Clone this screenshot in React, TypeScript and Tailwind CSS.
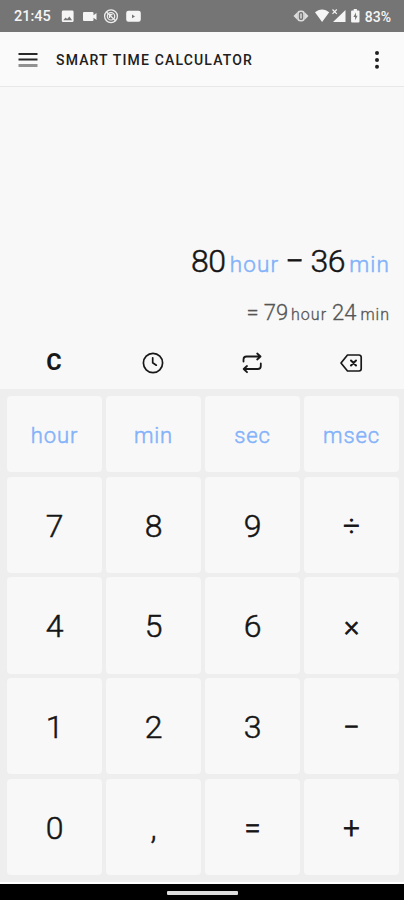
import React from 'react';

function StatusBar() {
  return (
    <header className="flex h-8 shrink-0 items-center bg-[#757575] pr-[13px] pl-[14px] text-[#f5f5f5]">
      <span className="w-[47px] pt-[2px] text-[14.5px] leading-4 font-medium">21:45</span>
      <svg className="h-8 w-[82px]" viewBox="0 0 82 32" fill="none">
        <path fillRule="evenodd" fill="#f5f5f5" d="M2.200 10.500h9a1.400 1.400 0 0 1 1.400 1.400v8.800a1.400 1.400 0 0 1-1.400 1.400h-9a1.400 1.400 0 0 1-1.400-1.400v-8.800a1.400 1.400 0 0 1 1.400-1.400zM2.300 20.300h8.800l-2.700-3.900-2.300 2.700-1.500-1.700z" />
        <path fill="#f5f5f5" d="M23 12h8.500a1 1 0 0 1 1 1v2.300l3-2.400v7.200l-3-2.400v2.300a1 1 0 0 1-1 1H23a1 1 0 0 1-1-1v-7a1 1 0 0 1 1-1z" />
        <circle cx="50" cy="16.300" r="6.400" stroke="#eeeeee" strokeWidth="1.300" />
        <circle cx="50" cy="16.300" r="3.700" stroke="#eeeeee" strokeWidth="1.200" />
        <path stroke="#eeeeee" strokeWidth="1.300" d="M45.500 12l9 8.700M48.500 18v-3.400h3" />
        <path fillRule="evenodd" fill="#f5f5f5" d="M67.500 10.800h10a2.300 2.300 0 0 1 2.300 2.300v6.400a2.300 2.300 0 0 1-2.300 2.300h-10a2.300 2.300 0 0 1-2.300-2.300v-6.400a2.300 2.300 0 0 1 2.300-2.300zM71 14.600v3.600l3-1.800z" />
      </svg>
      <svg className="ml-auto h-8 w-[70px]" viewBox="0 0 70 32" fill="none">
        <path fill="#dddddd" d="M.5 16l4-4v8zM15.500 16l-4-4v8z" />
        <rect x="5" y="11.200" width="6" height="9.600" rx="2.500" stroke="#dddddd" strokeWidth="1.600" />
        <path stroke="#dddddd" strokeWidth="1.500" d="M8 13.500v5" />
        <path fill="#f5f5f5" d="M22 12.300c4-3.900 10.200-3.900 14.200 0L29.100 22zM52.500 10v12H40zM59 10.500h1.700V9h3.200v1.500h1.700c.5 0 .9.400.9.900v10.200c0 .5-.4.900-.9.900H59c-.5 0-.9-.4-.9-.9V11.400c0-.5.400-.9.900-.9z" />
        <path stroke="#f5f5f5" strokeWidth="1.200" d="M39.500 9.500l4.300 4.300M43.800 9.500l-4.300 4.300" />
        <path fill="#777" d="M63 12.500l-2.600 4.500h1.700v3.300l2.500-4.500h-1.600z" />
      </svg>
      <span className="ml-[2px] pt-[2px] text-[14px] leading-4 font-medium">83%</span>
    </header>
  );
}

function TitleBar() {
  return (
    <div className="flex h-[55px] shrink-0 items-center border-b border-[#e8e8e8] bg-[#fafafa] pt-px pr-[21px] pl-[18px]">
      <svg className="h-[18px] w-5" viewBox="0 0 20 18">
        <path stroke="#292929" strokeWidth="2" d="M.5 3h19M.5 8.500h19" />
        <path stroke="#929292" strokeWidth="3" d="M.5 14.500h19" />
      </svg>
      <h1 className="ml-[18px] pt-px text-[14px] leading-5 font-medium tracking-[1.160px] text-[#202020]">SMART TIME CALCULATOR</h1>
      <svg className="ml-auto h-5 w-[12px]" viewBox="0 0 12 20" fill="#202020">
        <circle cx="6" cy="3" r="2" />
        <circle cx="6" cy="10" r="2" />
        <circle cx="6" cy="16.800" r="2" />
      </svg>
    </div>
  );
}

function Display() {
  return (
    <section className="flex h-[248px] shrink-0 flex-col items-end justify-end pr-[14px] pb-[4px]">
      <div className="flex items-baseline text-[32px] leading-10 font-light text-[#151515] [-webkit-text-stroke:0.5px]">
        <span className="tracking-[-0.300px]">80</span>
        <span className="ml-[4px] text-[22.500px] tracking-[1.1px] text-[#83b2fa]">hour</span>
        <span className="ml-[6px] [-webkit-text-stroke:0.8px]">−</span>
        <span className="ml-[7px] tracking-[-0.300px]">36</span>
        <span className="ml-[4px] text-[22.500px] tracking-[1.1px] text-[#83b2fa]">min</span>
      </div>
      <div className="mt-[13px] flex items-baseline text-[22px] leading-8 font-light text-[#555555] [-webkit-text-stroke:0.3px]">
        <span>=</span>
        <span className="ml-[5px]">79</span>
        <span className="ml-[3px] text-[16px] tracking-[1px]">hour</span>
        <span className="ml-[5px]">24</span>
        <span className="ml-[4px] text-[16px] tracking-[1px]">min</span>
      </div>
    </section>
  );
}

function Tools() {
  const button = 'flex items-center justify-center';
  return (
    <div className="grid h-[54px] shrink-0 grid-cols-4 gap-1 px-[6px] pt-[2px] text-[#181818]">
      <button className={button}><span className="pl-px text-[23.500px] leading-none font-bold">C</span></button>
      <button className={button} aria-label="History">
        <svg className="size-6" viewBox="0 0 24 24" fill="none" stroke="currentColor" strokeWidth="1.700" strokeLinecap="round">
          <circle cx="12" cy="12" r="9.600" />
          <path d="M11.700 6.800v5l3.600 2.400" />
        </svg>
      </button>
      <button className={button} aria-label="Convert">
        <svg className="size-6" viewBox="0 0 24 24" fill="none" stroke="currentColor" strokeWidth="1.800" strokeLinecap="round" strokeLinejoin="round">
          <path d="M3.500 10.500V8.500a3 3 0 0 1 3-3H20.500M17.200 2.500L20.500 5.500 17.200 8.500M20.800 12.500v2.500a3 3 0 0 1-3 3H3.700M7 15L3.700 18 7 21.200" />
        </svg>
      </button>
      <button className={button} aria-label="Backspace">
        <svg className="size-6" viewBox="0 0 24 24" fill="none" stroke="currentColor" strokeWidth="1.700" strokeLinecap="round" strokeLinejoin="round">
          <path d="M8.500 4H20a2.200 2.200 0 0 1 2.200 2.200v11.600a2.200 2.200 0 0 1-2.200 2.200H8.500L2 12z" />
          <path strokeWidth="2" d="M12 9.500l5 5M17 9.500l-5 5" />
        </svg>
      </button>
    </div>
  );
}

const units = ['hour', 'min', 'sec', 'msec'];
const keys = ['7', '8', '9', '÷', '4', '5', '6', '×', '1', '2', '3', '−', '0', ',', '=', '+'];
const operators = ['÷', '×', '−', '=', '+'];

function Keypad() {
  return (
    <section className="grid h-[493px] shrink-0 grid-cols-4 grid-rows-[76px_repeat(4,1fr)] gap-x-[4px] gap-y-[4.500px] bg-[#eeeeee] pt-[7px] pr-[5px] pb-[7px] pl-[7px]">
      {units.map((unit) => (
        <button key={unit} className="flex items-center justify-center rounded-[4px] bg-[#f8f8f8] pt-[3px] text-[22px] font-light tracking-[0.900px] text-[#83b2fa] [-webkit-text-stroke:0.5px]">{unit}</button>
      ))}
      {keys.map((key) => (
        <button key={key} className="flex items-center justify-center rounded-[4px] bg-[#f8f8f8] pt-[2px] text-[#151515]">
          <span className={operators.includes(key) ? 'text-[29px] leading-10 font-light [-webkit-text-stroke:0.8px]' : 'text-[32px] leading-10 font-light [-webkit-text-stroke:0.5px]'}>{key}</span>
        </button>
      ))}
    </section>
  );
}

export default function App() {
  return (
    <main className="flex h-[900px] w-[404px] flex-col overflow-hidden bg-[#f8f8f8] font-[Roboto,sans-serif]">
      <StatusBar />
      <TitleBar />
      <Display />
      <Tools />
      <Keypad />
      <footer className="flex h-[18px] shrink-0 items-center justify-center border-t-2 border-white bg-black pt-px">
        <div className="h-[4px] w-[71px] rounded-[1px] bg-[#dddddd]" />
      </footer>
    </main>
  );
}
